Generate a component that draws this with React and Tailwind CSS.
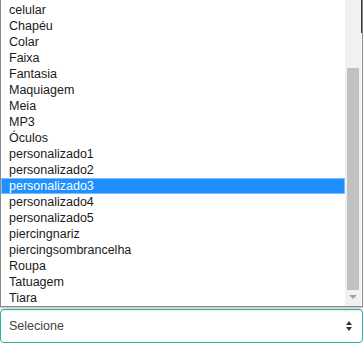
import React from "react";

const items = [
  "celular",
  "Chapéu",
  "Colar",
  "Faixa",
  "Fantasia",
  "Maquiagem",
  "Meia",
  "MP3",
  "Óculos",
  "personalizado1",
  "personalizado2",
  "personalizado3",
  "personalizado4",
  "personalizado5",
  "piercingnariz",
  "piercingsombrancelha",
  "Roupa",
  "Tatuagem",
  "Tiara",
];

const App = () => {
  return (
    <div className="w-[363px] h-[344px] bg-white font-['Liberation_Sans',Arial,sans-serif]">
      {/* Open list */}
      <div className="flex h-[307px] border border-[#8a8a8a] border-t-0 shadow-[0_2px_4px_rgba(0,0,0,0.25)] bg-white">
        <ul className="flex-1 pt-[2px]">
          {items.map((item) => (
            <li
              key={item}
              className={
                item === "personalizado3"
                  ? "h-4 leading-[14px] pl-[7px] text-[12.5px] bg-[#1e90ff] text-white border border-[#7bbcff]"
                  : "h-4 leading-4 pl-[8px] text-[12.5px] text-[#1a1a1a]"
              }
            >
              {item}
            </li>
          ))}
        </ul>
        {/* Scrollbar */}
        <div className="w-[16px] bg-[#f1f1f1] flex flex-col items-center pt-[68px] pb-[2px]">
          <div className="w-[12px] flex-1 bg-[#c1c1c1]" />
          <div className="h-[14px] flex items-center justify-center">
            <div className="w-0 h-0 border-l-[4px] border-r-[4px] border-t-[4px] border-l-transparent border-r-transparent border-t-[#a3a3a3]" />
          </div>
        </div>
        <div className="w-px bg-[#3a3a3a] h-[33px]" />
      </div>
      {/* Select box */}
      <div className="mt-[2px] h-[34px] flex items-center justify-between rounded-[4px] border border-[#2bb3a0] px-[8px]">
        <span className="text-[12.5px] text-[#444]">Selecione</span>
        <svg width="8" height="12" viewBox="0 0 8 12" className="mr-[1px]">
          <path d="M4 1 L7 5 H1 Z" fill="#333" />
          <path d="M4 11 L7 7 H1 Z" fill="#333" />
        </svg>
      </div>
    </div>
  );
};

export default App;
